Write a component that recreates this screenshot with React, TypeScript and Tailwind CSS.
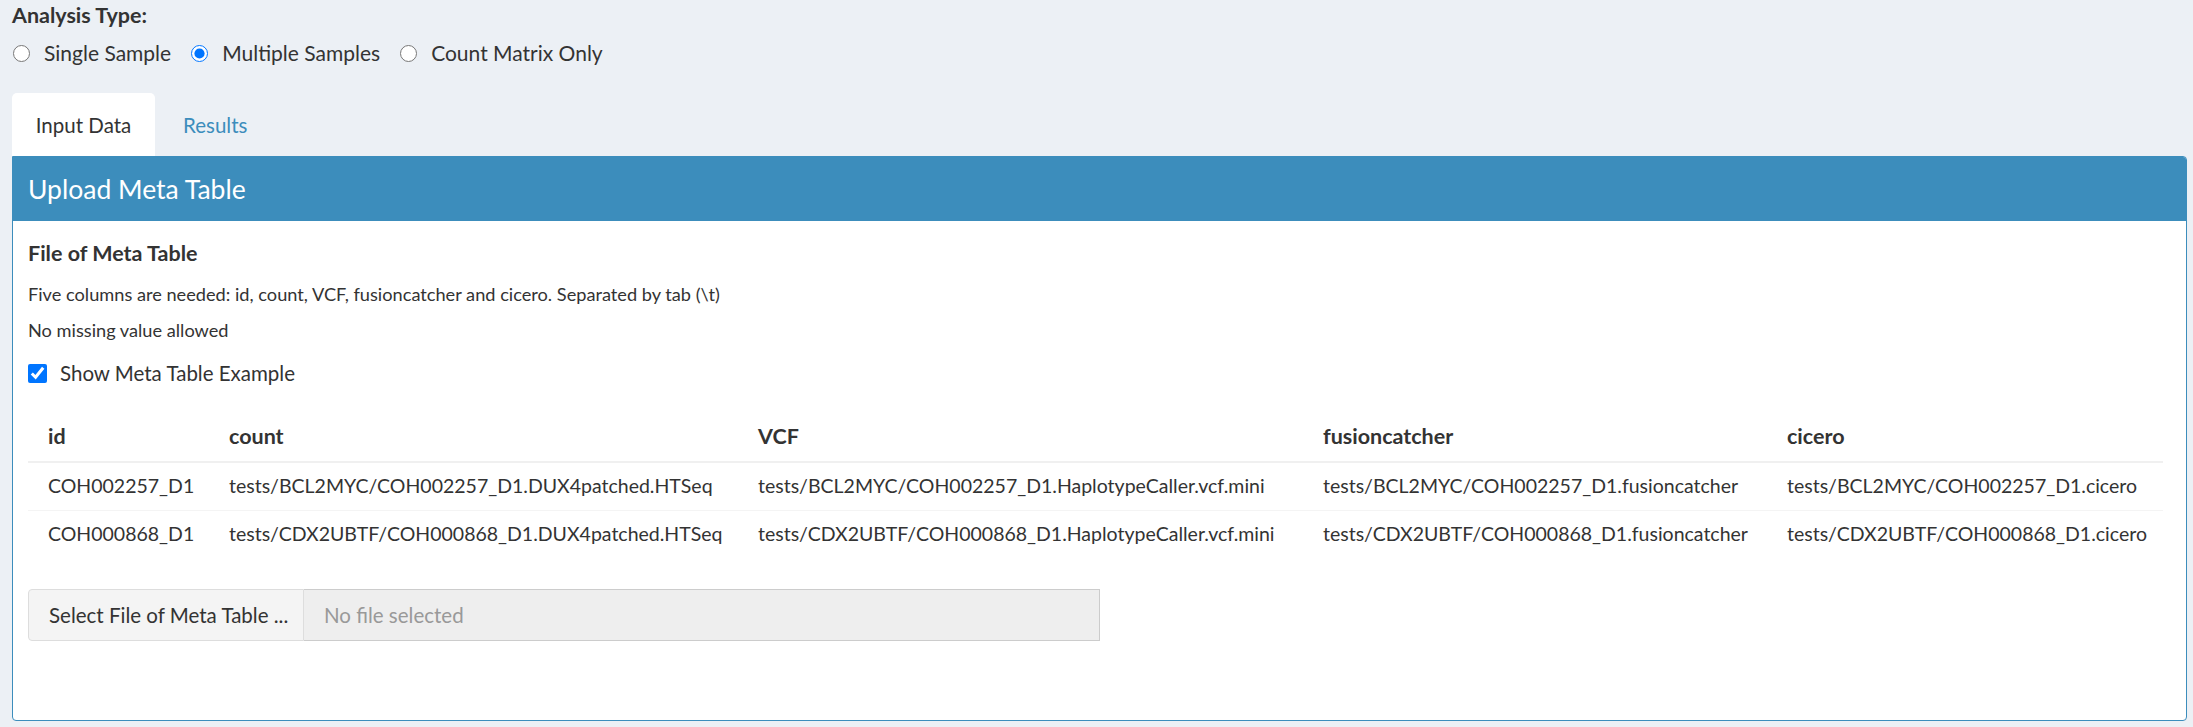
import React from "react";

const rows = [
  {
    id: "COH002257_D1",
    count: "tests/BCL2MYC/COH002257_D1.DUX4patched.HTSeq",
    vcf: "tests/BCL2MYC/COH002257_D1.HaplotypeCaller.vcf.mini",
    fusion: "tests/BCL2MYC/COH002257_D1.fusioncatcher",
    cicero: "tests/BCL2MYC/COH002257_D1.cicero",
  },
  {
    id: "COH000868_D1",
    count: "tests/CDX2UBTF/COH000868_D1.DUX4patched.HTSeq",
    vcf: "tests/CDX2UBTF/COH000868_D1.HaplotypeCaller.vcf.mini",
    fusion: "tests/CDX2UBTF/COH000868_D1.fusioncatcher",
    cicero: "tests/CDX2UBTF/COH000868_D1.cicero",
  },
];

const Radio = ({ label, checked }: { label: string; checked?: boolean }) => (
  <label className="flex items-center mr-[20px]">
    <input
      type="radio"
      name="analysis"
      defaultChecked={checked}
      className="w-[17px] h-[17px] m-0 mr-[14px] accent-[#0075ff]"
    />
    <span>{label}</span>
  </label>
);

const App = (): JSX.Element => {
  return (
    <div
      className="min-h-[727px] bg-[#ecf0f5] text-[#333] pl-[12px] pr-[6px] pt-[1px] pb-[8px] text-[20.5px] leading-[28px]"
      style={{ fontFamily: "Lato, 'Noto Sans', sans-serif" }}
    >
      <p className="font-bold text-[21.5px]">Analysis Type:</p>
      <div className="flex items-center mt-[10px] pl-[1px] text-[21px]">
        <Radio label="Single Sample" />
        <Radio label="Multiple Samples" checked />
        <Radio label="Count Matrix Only" />
      </div>

      {/* tabs */}
      <div className="flex mt-[26px]">
        <div className="w-[143px] h-[63px] bg-white rounded-t-[5px] flex items-center justify-center">
          Input Data
        </div>
        <div className="h-[63px] px-[24px] ml-[4px] flex items-center text-[#3c8dbc]">
          Results
        </div>
      </div>

      {/* box */}
      <div className="border border-[#3c8dbc] rounded-[4px] rounded-tl-none bg-white h-[565px] overflow-hidden">
        <div className="bg-[#3c8dbc] h-[64px] flex items-center px-[15px] text-white text-[26.5px]">
          Upload Meta Table
        </div>
        <div className="pl-[15px] pr-[23px] pt-[18px]">
          <p className="font-bold text-[21.5px]">File of Meta Table</p>
          <p className="text-[18.2px] leading-[24px] mt-[15px]">
            Five columns are needed: id, count, VCF, fusioncatcher and cicero. Separated by tab (\t)
          </p>
          <p className="text-[18.2px] leading-[24px] mt-[12px]">No missing value allowed</p>
          <label className="flex items-center mt-[17px]">
            <input
              type="checkbox"
              defaultChecked
              className="w-[19px] h-[19px] m-0 mr-[13px] accent-[#0075ff]"
            />
            <span>Show Meta Table Example</span>
          </label>

          <table className="table-fixed w-full mt-[24px] border-collapse text-[19.5px]">
            <colgroup>
              <col className="w-[181px]" />
              <col className="w-[529px]" />
              <col className="w-[565px]" />
              <col className="w-[464px]" />
              <col />
            </colgroup>
            <thead>
              <tr className="h-[51px] border-b-2 border-[#f0f0f0] text-left text-[21.5px]">
                <th className="pl-[20px] font-bold">id</th>
                <th className="pl-[20px] font-bold">count</th>
                <th className="pl-[20px] font-bold">VCF</th>
                <th className="pl-[20px] font-bold">fusioncatcher</th>
                <th className="pl-[20px] font-bold">cicero</th>
              </tr>
            </thead>
            <tbody>
              {rows.map((r, i) => (
                <tr key={r.id} className={`h-[48px] ${i > 0 ? "border-t border-[#f4f4f4]" : ""}`}>
                  <td className="pl-[20px] whitespace-nowrap">{r.id}</td>
                  <td className="pl-[20px] whitespace-nowrap">{r.count}</td>
                  <td className="pl-[20px] whitespace-nowrap">{r.vcf}</td>
                  <td className="pl-[20px] whitespace-nowrap">{r.fusion}</td>
                  <td className="pl-[20px] whitespace-nowrap">{r.cicero}</td>
                </tr>
              ))}
            </tbody>
          </table>

          <div className="flex mt-[31px] w-[1072px] h-[52px]">
            <div className="w-[276px] flex items-center pl-[20px] bg-[#f4f4f4] border border-[#ddd] rounded-l-[4px] whitespace-nowrap">
              Select File of Meta Table ...
            </div>
            <div className="flex-1 flex items-center pl-[20px] bg-[#eee] border border-[#ccc] border-l-0 text-[#999]">
              No file selected
            </div>
          </div>
        </div>
      </div>
    </div>
  );
};

export default App;
